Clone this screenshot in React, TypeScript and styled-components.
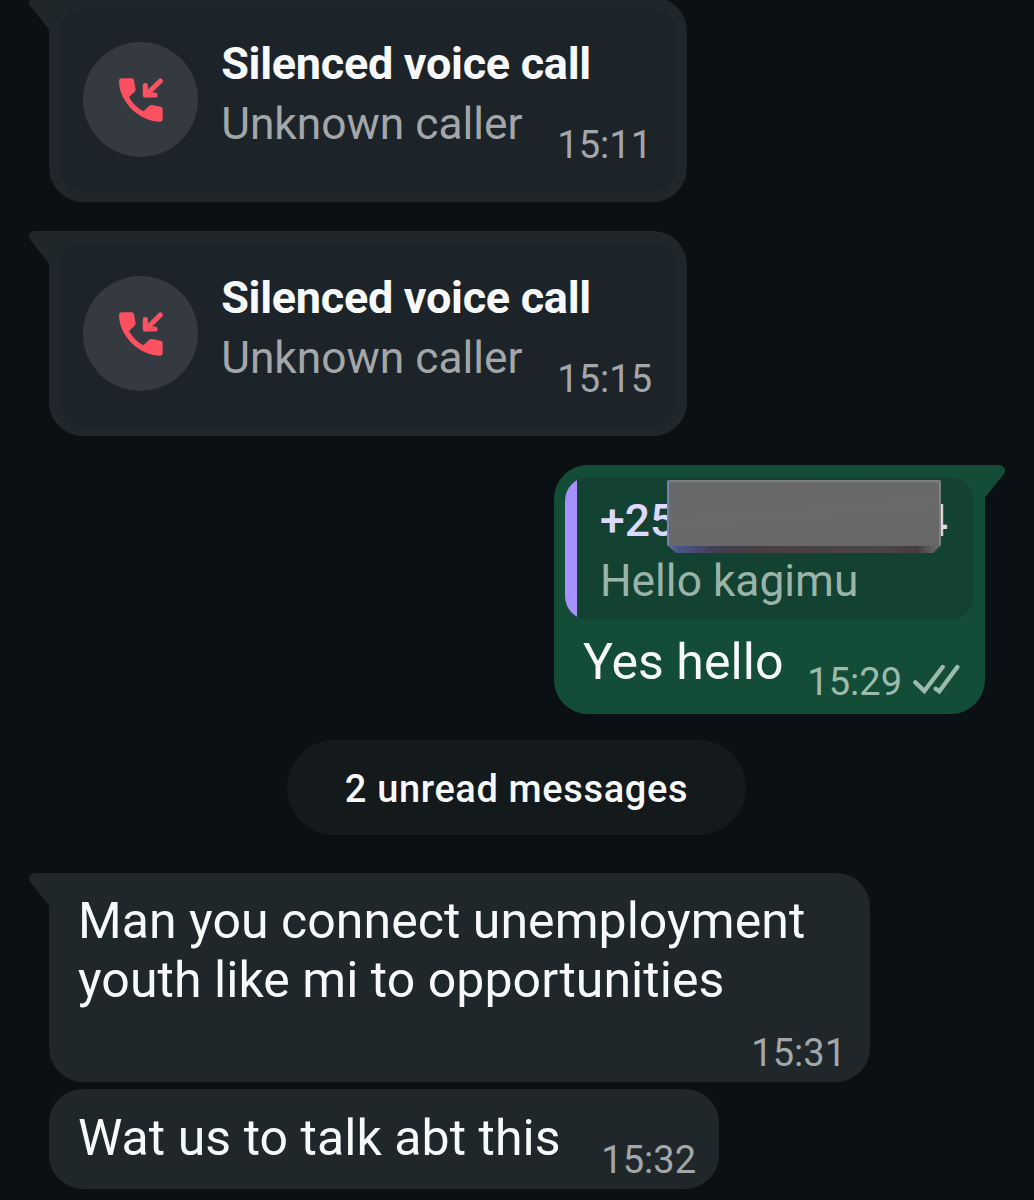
import React from "react";
import styled, { createGlobalStyle } from "styled-components";

const color = {
  page: "#0a1014",
  incoming: "#1f272a",
  card: "#1c2429",
  outgoing: "#144d37",
  quote: "#134232",
  accent: "#a791ff",
  text: "#f7f8fa",
  muted: "#a4a7a9",
  mutedGreen: "#9dbbad",
  missed: "#fd5061",
};

const GlobalStyle = createGlobalStyle`
  *, *::before, *::after { box-sizing: border-box; }
  html, body { margin: 0; background: ${color.page}; overflow: hidden; }
`;

const Chat = styled.main`
  display: flex;
  flex-direction: column;
  width: 1034px;
  height: 1200px;
  padding: 0 49px;
  overflow: hidden;
  background: ${color.page};
  color: ${color.text};
  font-family: Roboto, sans-serif;
`;

const Bubble = styled.article<{ $out?: boolean; $tail?: boolean; $w: number; $h: number; $gap: number }>`
  position: relative;
  flex: none;
  display: flex;
  flex-direction: column;
  align-self: ${(p) => (p.$out ? "flex-end" : "flex-start")};
  width: ${(p) => p.$w}px;
  height: ${(p) => p.$h}px;
  margin-top: ${(p) => p.$gap}px;
  border-radius: 34px;
  border-top-left-radius: ${(p) => (p.$tail && !p.$out ? 0 : 34)}px;
  border-top-right-radius: ${(p) => (p.$tail && p.$out ? 0 : 34)}px;
  background: ${(p) => (p.$out ? color.outgoing : color.incoming)};
`;

const TailSvg = styled.svg<{ $out?: boolean }>`
  position: absolute;
  top: 0;
  ${(p) => (p.$out ? "right: -20px; transform: scaleX(-1);" : "left: -20px;")}
`;

const Tail = ({ out }: { out?: boolean }) => (
  <TailSvg $out={out} width="21" height="33" viewBox="0 0 21 33">
    <path
      d="M21 0H6C.8 0-1.8 5.300 1.400 9.300L20 32.500H21Z"
      fill={out ? color.outgoing : color.incoming}
    />
  </TailSvg>
);

const CallCard = styled.div`
  display: flex;
  align-items: flex-start;
  height: 182px;
  margin: 12px 11px 0;
  padding: 33px 24px 0 23px;
  border-radius: 24px;
  background: ${color.card};
`;

const CallBadge = styled.div`
  flex: none;
  width: 115px;
  height: 115px;
  border-radius: 50%;
  background: #343a40;
`;

const CallText = styled.div`
  display: flex;
  flex-direction: column;
  width: 330px;
  margin: -8px 0 0 23.200px;
  white-space: nowrap;
`;

const CallTitle = styled.div`
  font-size: 45px;
  font-weight: 700;
  line-height: 60px;
  letter-spacing: -0.300px;
`;

const SubText = styled.div<{ $green?: boolean }>`
  color: ${(p) => (p.$green ? "#9ab4a9" : color.muted)};
  font-size: 44.300px;
  line-height: 60px;
`;

const Time = styled.time<{ $green?: boolean }>`
  color: ${(p) => (p.$green ? color.mutedGreen : color.muted)};
  font-size: 38px;
  line-height: 44px;
`;

const CallTime = styled(Time)`
  margin: 81px 0 0 auto;
`;

const CallIcon = () => (
  <svg width="115" height="115" viewBox="0 0 345 345">
    <path
      d="M117 109H146Q152 109 153 115L158 142Q158 146 155 149L138 165Q153 193 181 208L198 192Q202 188 207 189L233 194Q239 195 239 201V231Q239 239 231 239C170 239 108 180 108 117Q108 109 117 109Z"
      fill={color.missed}
    />
    <path
      d="M232 117L189 159M187 131V159H216"
      fill="none"
      stroke={color.missed}
      strokeWidth="15.500"
      strokeLinecap="round"
      strokeLinejoin="round"
    />
  </svg>
);

const CallMessage = ({ time, gap }: { time: string; gap: number }) => (
  <Bubble $w={638} $h={205} $gap={gap} $tail>
    <Tail />
    <CallCard>
      <CallBadge>
        <CallIcon />
      </CallBadge>
      <CallText>
        <CallTitle>Silenced voice call</CallTitle>
        <SubText>Unknown caller</SubText>
      </CallText>
      <CallTime>{time}</CallTime>
    </CallCard>
  </Bubble>
);

const Quote = styled.blockquote`
  position: relative;
  display: flex;
  flex-direction: column;
  height: 143px;
  margin: 12px 11px 0;
  padding: 14px 26px 0 35px;
  border-radius: 24px;
  background: linear-gradient(90deg, ${color.accent} 12px, ${color.quote} 12px);
`;

const QuoteAuthor = styled.div`
  display: flex;
  justify-content: space-between;
  color: #ddd8ff;
  font-size: 44.500px;
  font-weight: 500;
  line-height: 60px;
`;

const BlockEdge = styled.div`
  position: absolute;
  top: 3px;
  left: 102px;
  width: 274px;
  height: 73px;
  clip-path: polygon(0 1px, 1px 0, 273px 0, 100% 1px, 100% 65px, 266px 100%, 9px 100%, 0 65px);
  background: linear-gradient(90deg, #5a69a2 0, #4a5382 14px, #403e51 50px, #463e41 90px, #4b4445 220px, #453c3e 250px, #65706d 272px);
`;

const BlockFace = styled.div`
  height: 66px;
  border: 2px solid #7b8081;
  border-left-color: #7780a0;
  border-bottom: 0;
  border-radius: 3px 3px 2px 2px;
  background: linear-gradient(175deg, #676869, #6a6a6b 50%, #666768);
`;

const Line = styled.p`
  margin: 0;
  font-size: 50px;
  letter-spacing: 0.050px;
  line-height: 58.600px;
  white-space: nowrap;
`;

const ReplyRow = styled.div`
  display: flex;
  align-items: flex-start;
  justify-content: space-between;
  padding: 13px 24px 0 29px;
`;

const Status = styled.div`
  display: flex;
  gap: 11px;
  padding-top: 27px;
`;

const TicksSvg = styled.svg`
  margin-top: 3px;
`;

const Ticks = () => (
  <TicksSvg width="48" height="32" viewBox="0 0 144 96">
    <path
      d="M7 58L34 84L89 12M68 77L79 85L133 12"
      fill="none"
      stroke={color.mutedGreen}
      strokeWidth="13"
      strokeLinecap="round"
    />
  </TicksSvg>
);

const Unread = styled.div`
  flex: none;
  display: flex;
  align-items: center;
  justify-content: center;
  align-self: center;
  width: 459px;
  height: 95px;
  margin: 26px 1px 0 0;
  padding-top: 4px;
  border-radius: 48px;
  background: #14191c;
  font-size: 38px;
  font-weight: 500;
  letter-spacing: 0.630px;
`;

const LongBody = styled.div`
  display: flex;
  flex-direction: column;
  padding: 19.500px 24px 0 29px;
`;

const LongTime = styled(Time)`
  align-self: flex-end;
  margin-top: 22px;
`;

const ShortBody = styled.div`
  display: flex;
  align-items: flex-start;
  justify-content: space-between;
  padding: 20px 23px 0 29px;
`;

const ShortTime = styled(Time)`
  margin-top: 29px;
`;

export default function App() {
  return (
    <>
      <GlobalStyle />
      <Chat>
        <CallMessage time="15:11" gap={-3} />
        <CallMessage time="15:15" gap={29} />

        <Bubble $out $tail $w={431} $h={248.5} $gap={29}>
          <Tail out />
          <Quote>
            <QuoteAuthor>
              <span>+25</span>
              <span>4</span>
            </QuoteAuthor>
            <SubText $green>Hello kagimu</SubText>
            <BlockEdge>
              <BlockFace />
            </BlockEdge>
          </Quote>
          <ReplyRow>
            <Line>Yes hello</Line>
            <Status>
              <Time $green>15:29</Time>
              <Ticks />
            </Status>
          </ReplyRow>
        </Bubble>

        <Unread>2 unread messages</Unread>

        <Bubble $tail $w={821} $h={209.5} $gap={38}>
          <Tail />
          <LongBody>
            <Line>Man you connect unemployment</Line>
            <Line>youth like mi to opportunities</Line>
            <LongTime>15:31</LongTime>
          </LongBody>
        </Bubble>

        <Bubble $w={670} $h={100} $gap={7}>
          <ShortBody>
            <Line>Wat us to talk abt this</Line>
            <ShortTime>15:32</ShortTime>
          </ShortBody>
        </Bubble>
      </Chat>
    </>
  );
}
